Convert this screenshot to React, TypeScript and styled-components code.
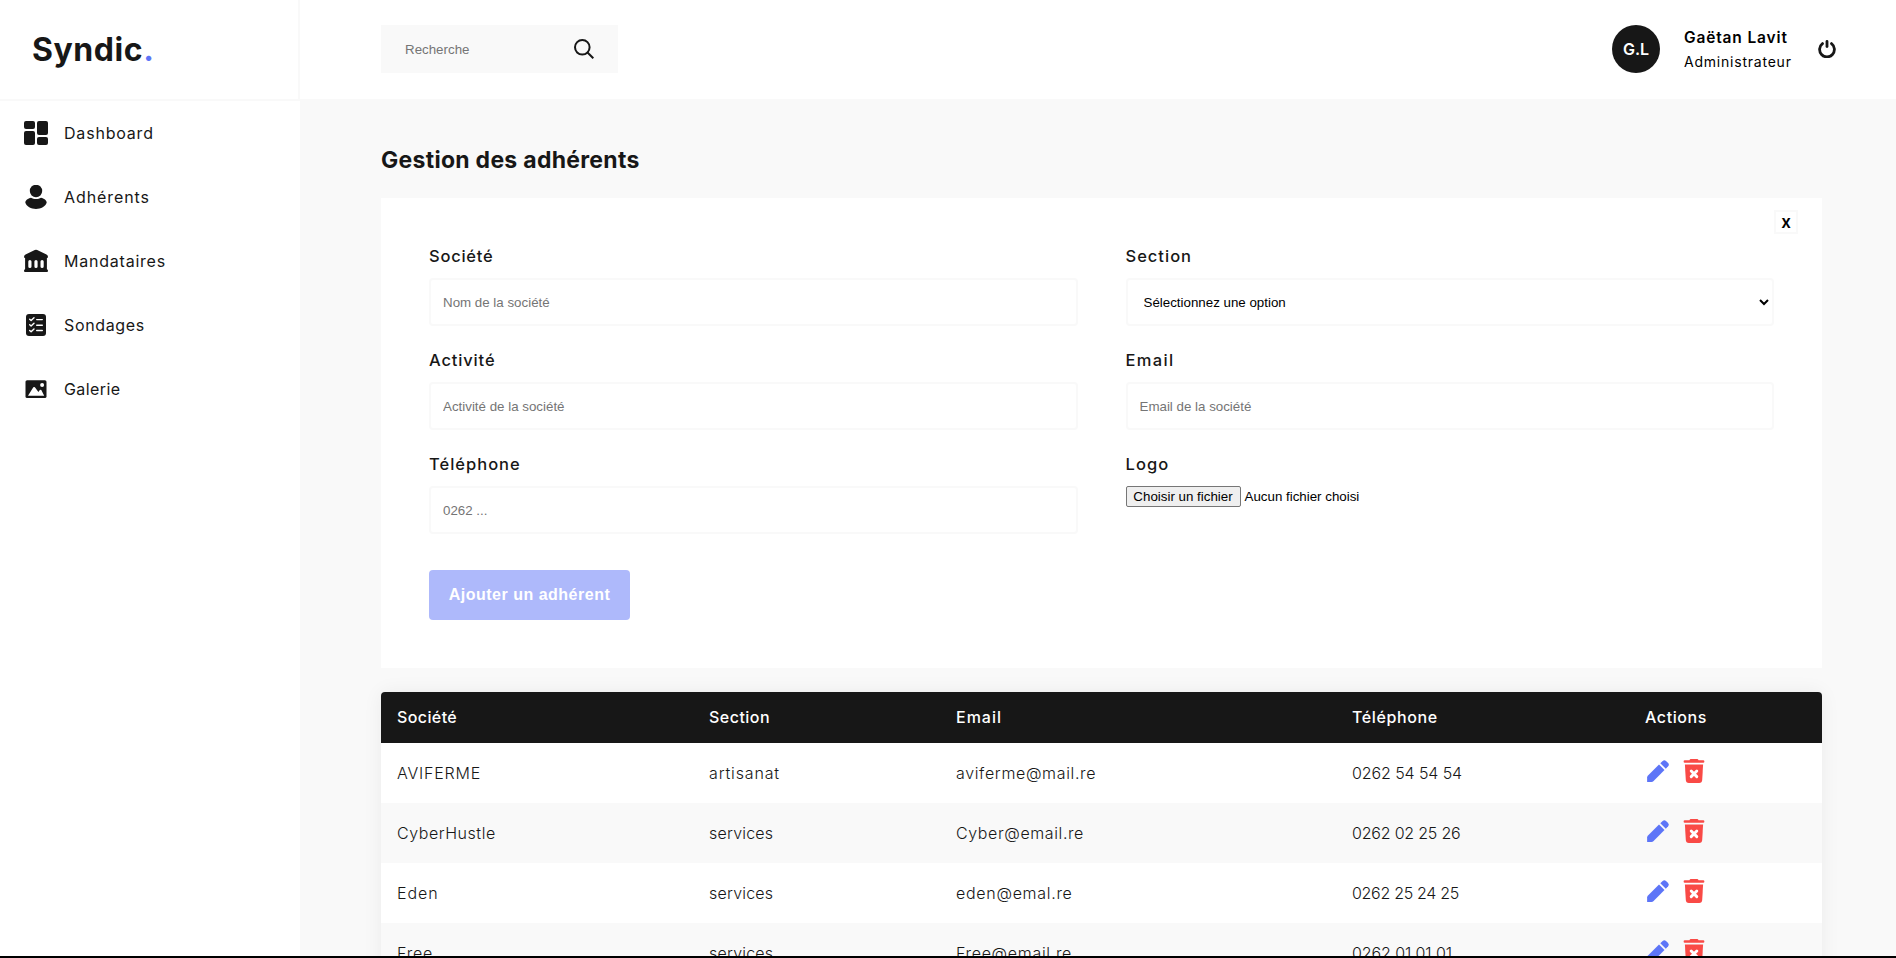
import React from "react";
import styled, { createGlobalStyle } from "styled-components";

const ink = "#171717";
const pale = "#f9f9f9";
const blue = "#5d75f7";
const red = "#f94a46";
const brand = `Inter, "Open Sans", sans-serif`;
const system = `"Liberation Sans", Arial, sans-serif`;

const GlobalStyle = createGlobalStyle`
  *, *::before, *::after { box-sizing: border-box; margin: 0; padding: 0; }
  html, body { height: 100%; overflow: hidden; }
  body { font-family: ${brand}; font-size: 16px; color: ${ink}; background: ${pale}; }
  svg { display: block; flex: none; }
`;

const Page = styled.div`
  display: flex;
  height: 100vh;
  overflow: hidden;
  border-bottom: 2px solid #000;
`;

const Sidebar = styled.aside`
  flex: 0 0 300px;
  background: #fff;
`;

const Brand = styled.div`
  display: flex;
  align-items: center;
  height: 101px;
  padding: 0 0 1px 32px;
  border-right: 2px solid ${pale};
  border-bottom: 2px solid ${pale};
  font-size: 32px;
  font-weight: 700;
  letter-spacing: 0.55px;
`;

const Dot = styled.span`
  color: ${blue};
`;

const Nav = styled.nav`
  display: flex;
  flex-direction: column;
`;

const NavItem = styled.a<{ $tracking: number }>`
  display: flex;
  align-items: center;
  gap: 16px;
  height: 64px;
  padding: 0 24px;
  font-size: 16px;
  letter-spacing: ${(p) => p.$tracking}px;
`;

const Main = styled.div`
  flex: 1;
  min-width: 0;
`;

const Header = styled.header`
  display: flex;
  align-items: center;
  justify-content: space-between;
  height: 99px;
  padding: 0 60px 1px 81px;
  background: #fff;
`;

const SearchBox = styled.label`
  display: flex;
  align-items: center;
  justify-content: space-between;
  width: 237px;
  height: 48px;
  padding: 0 24px;
  background: ${pale};
`;

const SearchInput = styled.input`
  width: 150px;
  border: 0;
  outline: 0;
  background: transparent;
  font: 13.333px ${system};
  &::placeholder { color: #757575; }
`;

const Account = styled.div`
  display: flex;
  align-items: center;
  gap: 24px;
`;

const Avatar = styled.div`
  display: grid;
  place-items: center;
  width: 48px;
  height: 48px;
  border-radius: 50%;
  background: ${ink};
  color: #fff;
  font-size: 16px;
  font-weight: 600;
`;

const Identity = styled.div`
  display: flex;
  flex-direction: column;
  gap: 5px;
  width: 110px;
  white-space: nowrap;
  color: #000;
`;

const UserName = styled.span`
  font-size: 15.5px;
  line-height: 20px;
  font-weight: 600;
  letter-spacing: 0.85px;
`;

const Role = styled.span`
  font-size: 14px;
  line-height: 18px;
  letter-spacing: 0.78px;
`;

const Content = styled.main`
  padding: 0 74px 0 81px;
`;

const Title = styled.h1`
  height: 99px;
  padding-top: 47px;
  font-size: 23px;
  line-height: 28px;
  font-weight: 700;
  letter-spacing: 0.28px;
`;

const FormCard = styled.form`
  position: relative;
  height: 470px;
  padding: 48px;
  background: #fff;
`;

const CloseButton = styled.button`
  position: absolute;
  top: 12px;
  right: 24px;
  width: 24px;
  height: 24px;
  border: 2px solid ${pale};
  background: #fff;
  color: #000;
  font: 600 17px/18px ${brand};
`;

const Fields = styled.div`
  display: grid;
  grid-template-columns: 1fr 1fr;
  gap: 24px 48px;
`;

const Field = styled.div`
  display: flex;
  flex-direction: column;
  align-items: flex-start;
  gap: 12px;
  height: 80px;
`;

const Label = styled.label<{ $tracking: number }>`
  font-size: 16.5px;
  line-height: 20px;
  font-weight: 500;
  letter-spacing: ${(p) => p.$tracking}px;
`;

const Input = styled.input`
  width: 100%;
  height: 48px;
  padding: 0 12px;
  border: 2px solid ${pale};
  border-radius: 4px;
  font: 13.333px ${system};
  &::placeholder { color: #757575; }
`;

const Select = styled.select`
  width: 100%;
  height: 48px;
  padding: 0 1px 0 12px;
  border: 2px solid ${pale};
  border-radius: 4px;
  background: #fff;
  color: #000;
  font: 13.333px ${system};
`;

const FilePicker = styled.div`
  display: flex;
  align-items: center;
  gap: 4px;
  color: #000;
  font: 13.333px ${system};
`;

const FileButton = styled.button`
  width: 115px;
  height: 21px;
  border: 1px solid #767676;
  border-radius: 2px;
  background: #efefef;
  color: #000;
  font: 13.333px ${system};
`;

const Submit = styled.button`
  width: 201px;
  height: 50px;
  margin-top: 36px;
  border: 0;
  border-radius: 4px;
  background: #aeb9fb;
  color: #fff;
  font: 700 16px ${system};
  letter-spacing: 0.5px;
`;

const Table = styled.table`
  width: 100%;
  margin-top: 24px;
  table-layout: fixed;
  border-collapse: collapse;
  border-radius: 4px 4px 0 0;
  overflow: hidden;
  background: #fff;
  box-shadow: 0 0 20px rgba(0, 0, 0, 0.06);
`;

const HeadCell = styled.th<{ $width?: number; $tracking: number }>`
  width: ${(p) => (p.$width ? `${p.$width}px` : "auto")};
  height: 51px;
  padding: 0 16px 2px;
  background: ${ink};
  color: #fff;
  font-size: 16px;
  font-weight: 500;
  text-align: left;
  letter-spacing: ${(p) => p.$tracking}px;
`;

const Row = styled.tr`
  height: 60px;
  &:nth-child(even) { background: ${pale}; }
`;

const Cell = styled.td<{ $tracking?: number }>`
  padding: 0 16px;
  font-size: 16px;
  font-weight: 300;
  white-space: nowrap;
  letter-spacing: ${(p) => p.$tracking ?? 0}px;
`;

const Actions = styled.div`
  display: flex;
  gap: 12px;
  padding: 0 0 4px 1px;
`;

const DashboardIcon = () => (
  <svg width="24" height="24" viewBox="0 0 24 24" fill={ink}>
    <rect width="11" height="8" rx="2" />
    <rect x="13" width="11" height="14" rx="2" />
    <rect y="10" width="11" height="14" rx="2" />
    <rect x="13" y="16" width="11" height="8" rx="2" />
  </svg>
);

const UserIcon = () => (
  <svg width="24" height="24" viewBox="0 0 24 24" fill={ink}>
    <circle cx="12" cy="6" r="6.2" />
    <path d="M7 12.700C9.800 14.400 14.200 14.400 17 12.700C20 13.200 22.700 15.500 22.700 17.600C21.500 21.500 17 24 12 24S2.500 21.500 1.300 17.600C1.300 15.500 4 13.200 7 12.700Z" />
  </svg>
);

const BankIcon = () => (
  <svg width="24" height="24" viewBox="0 0 24 24" fill={ink}>
    <path
      fillRule="evenodd"
      d="M10.800 1.100Q12 .4 13.200 1.100L22.500 5.600Q24 6.500 24 8Q24 9 22.900 9V20.300Q24 20.500 24 21.700Q24 22.900 23 22.900H1Q0 22.900 0 21.700Q0 20.500 1.100 20.300V9Q0 9 0 8Q0 6.500 1.500 5.600ZM4.300 12.500V17.500Q4.300 19.100 5.900 19.100Q7.500 19.100 7.500 17.500V12.500Q7.500 11 5.900 11Q4.300 11 4.300 12.500ZM10.400 12.500V17.500Q10.400 19.100 12 19.100Q13.600 19.100 13.600 17.500V12.500Q13.600 11 12 11Q10.400 11 10.400 12.500ZM16.500 12.500V17.500Q16.500 19.100 18.100 19.100Q19.700 19.100 19.700 17.500V12.500Q19.700 11 18.100 11Q16.500 11 16.500 12.500Z"
    />
  </svg>
);

const ChecklistIcon = () => (
  <svg width="24" height="24" viewBox="0 0 24 24" fill="none">
    <rect x="2" y="1" width="20" height="22" rx="3" fill={ink} />
    <g stroke="#fff" strokeWidth="1.400" strokeLinecap="round" strokeLinejoin="round">
      <path d="M5.700 6.200L7.100 7.500L10 4.700M5.700 11.800L7.100 13.100L10 10.300M5.700 17.400L7.100 18.700L10 15.900" />
      <path d="M12.700 6.600H18.300M12.700 12.200H18.300M12.700 17.500H18.300" />
    </g>
  </svg>
);

const PictureIcon = () => (
  <svg width="24" height="24" viewBox="0 0 24 24">
    <rect x="1.500" y="3.200" width="21" height="17.800" rx="1.600" fill={ink} />
    <path
      d="M4 18.700L9.300 10.300Q10.100 9.500 10.900 10.300L14.400 15L15.800 13Q16.500 12.400 17.300 13.100L20.200 18.700Z"
      fill="#fff"
    />
    <circle cx="18.100" cy="8" r="2" fill="#fff" />
  </svg>
);

const SearchIcon = () => (
  <svg width="20" height="20" viewBox="0 0 20 20" fill="none" stroke={ink} strokeWidth="2">
    <circle cx="8.300" cy="8.300" r="7.300" />
    <path d="M13.500 13.500L19.300 19.300" />
  </svg>
);

const PowerIcon = () => (
  <svg width="18" height="18" viewBox="0 0 18 18" fill="none" stroke={ink} strokeWidth="2.800" strokeLinecap="round">
    <path d="M4.500 3.600A7.400 7.400 0 1 0 13.500 3.600" />
    <path d="M9 1.500V6.600" />
  </svg>
);

const PencilIcon = () => (
  <svg width="24" height="24" viewBox="0 0 24 24" fill={blue}>
    <path d="M1.100 22.900V18.500Q1.100 17.300 2 16.400L13 5.500L18.500 11L7.600 22Q6.700 22.900 5.500 22.900Z" />
    <path d="M14.300 4.200L16.700 1.900Q18.300.5 20 1.900L22.100 4Q23.600 5.700 22.100 7.300L19.800 9.700Z" />
  </svg>
);

const TrashIcon = () => (
  <svg width="24" height="24" viewBox="0 0 24 24">
    <path
      d="M7.500 1.300Q7.700 0 9 0H15Q16.300 0 16.500 1.300H21.200Q22.400 1.300 22.400 2.500Q22.400 3.700 21.200 3.700H2.800Q1.600 3.700 1.600 2.500Q1.600 1.300 2.800 1.300Z"
      fill={red}
    />
    <path d="M2.900 5.500H21.100L20.200 21Q20 24 17.200 24H6.800Q4 24 3.800 21Z" fill={red} />
    <path d="M9.200 12L14.800 17.600M14.800 12L9.200 17.600" stroke="#fff" strokeWidth="2.900" strokeLinecap="round" />
  </svg>
);

const navigation = [
  { label: "Dashboard", icon: <DashboardIcon />, tracking: 0.8 },
  { label: "Adhérents", icon: <UserIcon />, tracking: 0.92 },
  { label: "Mandataires", icon: <BankIcon />, tracking: 0.78 },
  { label: "Sondages", icon: <ChecklistIcon />, tracking: 0.65 },
  { label: "Galerie", icon: <PictureIcon />, tracking: 0.4 },
];

const columns = [
  { label: "Société", width: 312, tracking: 0.4 },
  { label: "Section", width: 247, tracking: 0.47 },
  { label: "Email", width: 396, tracking: 1 },
  { label: "Téléphone", width: 293, tracking: 0.6 },
  { label: "Actions", tracking: 0.6 },
];

type Value = { text: string; tracking: number };

const members: Value[][] = [
  [
    { text: "AVIFERME", tracking: 0.8 },
    { text: "artisanat", tracking: 0.85 },
    { text: "aviferme@mail.re", tracking: 0.65 },
    { text: "0262 54 54 54", tracking: -0.1 },
  ],
  [
    { text: "CyberHustle", tracking: 0.55 },
    { text: "services", tracking: 0.2 },
    { text: "Cyber@email.re", tracking: 0.6 },
    { text: "0262 02 25 26", tracking: -0.2 },
  ],
  [
    { text: "Eden", tracking: 0.9 },
    { text: "services", tracking: 0.2 },
    { text: "eden@emal.re", tracking: 0.7 },
    { text: "0262 25 24 25", tracking: -0.3 },
  ],
  [
    { text: "Free", tracking: 0.8 },
    { text: "services", tracking: 0.2 },
    { text: "Free@email.re", tracking: 0.68 },
    { text: "0262 01 01 01", tracking: -0.1 },
  ],
];

export default function App() {
  return (
    <>
      <GlobalStyle />
      <Page>
        <Sidebar>
          <Brand>
            Syndic<Dot>.</Dot>
          </Brand>
          <Nav>
            {navigation.map((item) => (
              <NavItem key={item.label} $tracking={item.tracking}>
                {item.icon}
                {item.label}
              </NavItem>
            ))}
          </Nav>
        </Sidebar>
        <Main>
          <Header>
            <SearchBox>
              <SearchInput placeholder="Recherche" />
              <SearchIcon />
            </SearchBox>
            <Account>
              <Avatar>G.L</Avatar>
              <Identity>
                <UserName>Gaëtan Lavit</UserName>
                <Role>Administrateur</Role>
              </Identity>
              <PowerIcon />
            </Account>
          </Header>
          <Content>
            <Title>Gestion des adhérents</Title>
            <FormCard>
              <CloseButton type="button">x</CloseButton>
              <Fields>
                <Field>
                  <Label $tracking={0.75}>Société</Label>
                  <Input placeholder="Nom de la société" />
                </Field>
                <Field>
                  <Label $tracking={1}>Section</Label>
                  <Select>
                    <option>Sélectionnez une option</option>
                  </Select>
                </Field>
                <Field>
                  <Label $tracking={0.85}>Activité</Label>
                  <Input placeholder="Activité de la société" />
                </Field>
                <Field>
                  <Label $tracking={1.35}>Email</Label>
                  <Input placeholder="Email de la société" />
                </Field>
                <Field>
                  <Label $tracking={1}>Téléphone</Label>
                  <Input placeholder="0262 ..." />
                </Field>
                <Field>
                  <Label $tracking={1.1}>Logo</Label>
                  <FilePicker>
                    <FileButton type="button">Choisir un fichier</FileButton>
                    Aucun fichier choisi
                  </FilePicker>
                </Field>
              </Fields>
              <Submit type="button">Ajouter un adhérent</Submit>
            </FormCard>
            <Table>
              <thead>
                <tr>
                  {columns.map((column) => (
                    <HeadCell key={column.label} $width={column.width} $tracking={column.tracking}>
                      {column.label}
                    </HeadCell>
                  ))}
                </tr>
              </thead>
              <tbody>
                {members.map((values) => (
                  <Row key={values[0].text}>
                    {values.map((value, index) => (
                      <Cell key={index} $tracking={value.tracking}>
                        {value.text}
                      </Cell>
                    ))}
                    <Cell>
                      <Actions>
                        <PencilIcon />
                        <TrashIcon />
                      </Actions>
                    </Cell>
                  </Row>
                ))}
              </tbody>
            </Table>
          </Content>
        </Main>
      </Page>
    </>
  );
}
